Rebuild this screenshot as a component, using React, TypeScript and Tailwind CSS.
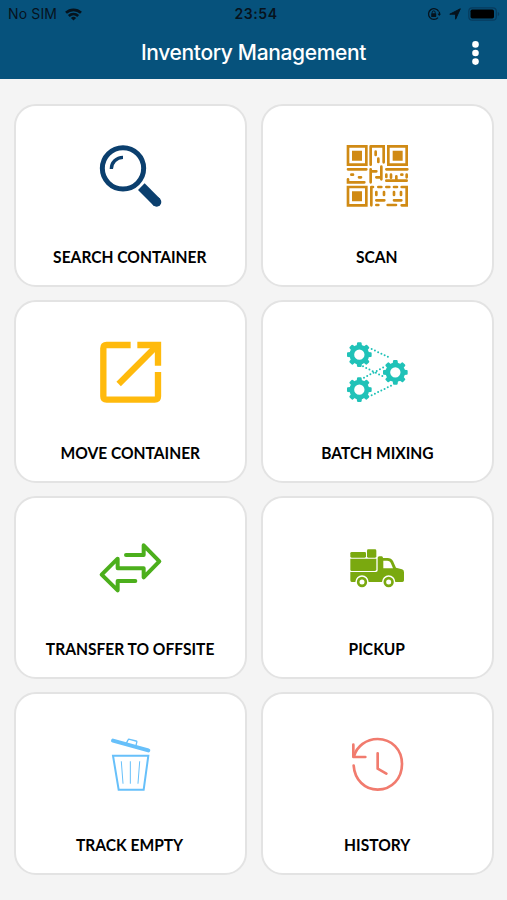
import type { ReactNode } from "react"

const iconProps = {
  viewBox: "0 0 243 240",
  className: "h-[80px] w-[81px] shrink-0",
  fill: "none",
  "aria-hidden": true,
}

const SearchIcon = () => (
  <svg {...iconProps} viewBox="0 3 243 240" stroke="#0b3f6e">
    <circle cx="99" cy="100" r="62" strokeWidth="15" />
    <path d="M64 102C64 83 79 67 99 67" strokeWidth="10" />
    <path d="M154 155L201 202" strokeWidth="28" />
    <circle cx="200" cy="201" r="14" fill="#0b3f6e" stroke="none" />
  </svg>
)

const QrIcon = () => (
  <svg {...iconProps} viewBox="0 3 243 240" stroke="#d08a14" strokeWidth="8" strokeLinecap="round">
    {/* Finder squares */}
    <path d="M33 34H88V89H33ZM154 34H209V89H154ZM33 156H88V211H33Z" />
    <path d="M45 47H75V77H45ZM167 47H197V77H167ZM45 169H75V199H45Z" fill="#d08a14" stroke="none" />
    {/* Data modules */}
    <path d="M101 34V89M101 34H140V82M116 50V60M124 71V81" />
    <path d="M33 103H88M43 119H48M33 133V142H82M66 127H72" />
    <path d="M101 103V142M101 109H118M118 127H133M133 95V133" />
    <path d="M148 103H211M148 119V126M162 119V128M148 137H209M178 124V137M193 119H196M209 119V127" />
    <path d="M103 156V211M103 156H108M124 156H133M148 156H157M171 156H180M194 156H209V211H194" />
    <path d="M118 196H142M171 196H193M118 171V180M141 171V180M171 171V180M192 171V180M118 210H124M152 210H177" />
  </svg>
)

const MoveIcon = () => (
  <svg {...iconProps} stroke="#ffba0c" strokeWidth="19">
    <path d="M122 39H50Q40 39 40 49V193Q40 203 50 203H194Q204 203 204 193V120" />
    <path d="M142 39H204V101" />
    <path d="M86 156L199 43" />
  </svg>
)

const TOOTH_ANGLES = [0, 45, 90, 135, 180, 225, 270, 315]

const Gear = ({ x, y }: { x: number; y: number }) => (
  <g transform={`translate(${x} ${y})`}>
    <circle r="22.5" strokeWidth="14" />
    {TOOTH_ANGLES.map((angle) => (
      <path key={angle} d="M-5 -26L-4 -34H4L5 -26Z" strokeWidth="6" strokeLinejoin="round" fill="#20c2b8" transform={`rotate(${angle})`} />
    ))}
  </g>
)

const BatchIcon = () => (
  <svg {...iconProps} stroke="#20c2b8">
    <Gear x={67} y={68} />
    <Gear x={175} y={121} />
    <Gear x={67} y={173} />
    <path
      d="M104 51L162 79M78 103L140 134M81 137L140 106M104 190L162 161"
      strokeWidth="6"
      strokeLinecap="round"
      strokeDasharray="0 10.8"
    />
  </svg>
)

const TransferIcon = () => (
  <svg {...iconProps} stroke="#4caf1c" strokeWidth="12" strokeLinecap="round" strokeLinejoin="round">
    <path d="M108 81H161V52L208 100L161 148V121H83V92L35 140L83 187V159H136" />
  </svg>
)

const TruckIcon = () => (
  <svg {...iconProps} fill="#7aa90f">
    <rect x="40" y="72" width="47" height="17" rx="4" />
    <rect x="90" y="64" width="28" height="25" rx="4" />
    <path d="M40 92H118V124Q118 129 113 129H44Q40 129 40 125Z" />
    <path d="M40 132H117Q122 132 122 127V90Q122 85 127 85H134Q138 85 138 90H152Q163 90 168 99L177 119L195 124Q201 126 201 133V157Q201 162 196 162H175A20 20 0 0 0 135 162H95A20 20 0 0 0 55 162H44Q40 162 40 157Z" />
    <path d="M139 98H151Q158 98 161 104L168 121H139Z" fill="#fff" />
    <g stroke="#7aa90f" strokeWidth="8" fill="#fff">
      <circle cx="75" cy="162" r="11.5" />
      <circle cx="155" cy="162" r="11.5" />
    </g>
  </svg>
)

const TrashIcon = () => (
  <svg {...iconProps} stroke="#67c0fa" strokeLinecap="round">
    <path d="M69 50L175 79" strokeWidth="12" />
    <path d="M110 56L114 48Q115 45 119 46L138 51Q142 52 140 56L138 64" strokeWidth="4" />
    <path d="M69 95H175L161 197H86Z" strokeWidth="6" />
    <path d="M94 113L99 178M121 113V178M149 113L144 178" strokeWidth="3" />
  </svg>
)

const HistoryIcon = () => (
  <svg {...iconProps} stroke="#f17b6e" strokeWidth="8" strokeLinecap="round" strokeLinejoin="round">
    <path d="M50 125C53 168 84 197 122 197C165 197 195 163 195 120C195 77 164 45 122 45C88 45 59 67 51 97" />
    <path d="M49 62V99H85M122 88V134L148 149" />
  </svg>
)

type Tile = { label: string; icon: ReactNode }

const tiles: Tile[] = [
  { label: "SEARCH CONTAINER", icon: <SearchIcon /> },
  { label: "SCAN", icon: <QrIcon /> },
  { label: "MOVE CONTAINER", icon: <MoveIcon /> },
  { label: "BATCH MIXING", icon: <BatchIcon /> },
  { label: "TRANSFER TO OFFSITE", icon: <TransferIcon /> },
  { label: "PICKUP", icon: <TruckIcon /> },
  { label: "TRACK EMPTY", icon: <TrashIcon /> },
  { label: "HISTORY", icon: <HistoryIcon /> },
]

const StatusBar = () => (
  <div className="grid h-7 grid-cols-3 items-center pl-2 pr-[7px] text-[#06131d]">
    <div className="flex items-center gap-2">
      <span className="text-[14px] leading-none tracking-[0.15px]">No SIM</span>
      <svg viewBox="0 0 17 13" className="h-[13px] w-[17px]" fill="none" stroke="currentColor" strokeWidth="2.7" aria-hidden>
        <path d="M1 4.8C5.2 .8 11.8 .8 16 4.8M3.8 8C6.5 5.5 10.5 5.5 13.2 8" />
        <path d="M8.5 12.5L5.9 9.9Q8.5 7.8 11.1 9.9Z" fill="currentColor" stroke="none" />
      </svg>
    </div>
    <span className="pl-1 text-center text-[14px] font-semibold leading-none tracking-[0.6px]">23:54</span>
    <div className="flex items-center justify-end">
      <svg viewBox="0 0 14 14" className="mr-2 size-[14px]" fill="none" stroke="currentColor" strokeWidth="1.3" aria-hidden>
        <path d="M11.7 4.5A5.4 5.4 0 1 0 11 10.6M12.4 4.8V7.5" />
        <path d="M10.5 6.7H14L12.2 9Z" fill="currentColor" stroke="none" />
        <rect x="4.2" y="6.3" width="5" height="3.7" rx=".5" fill="currentColor" stroke="none" />
        <path d="M5.2 6.5V5.4A1.5 1.5 0 0 1 8.2 5.4V6.5" strokeWidth="1" />
      </svg>
      <svg viewBox="0 0 12 12" className="mr-[7px] size-[12px]" fill="currentColor" stroke="currentColor" strokeWidth="1" strokeLinejoin="round" aria-hidden>
        <path d="M11.3 .8L6.6 11.2V6.2H.8Z" />
      </svg>
      <svg viewBox="0 0 32 14" className="h-[14px] w-[32px]" aria-hidden>
        <rect x=".8" y=".8" width="27.5" height="12.4" rx="3.5" fill="none" stroke="#073b5d" strokeWidth="1.2" />
        <rect x="2.5" y="2.5" width="23.5" height="9" rx="1.7" fill="#000" />
        <path d="M29.8 5V9Q31.3 8.5 31.3 7T29.8 5" fill="#073b5d" />
      </svg>
    </div>
  </div>
)

const App = () => (
  <div className="min-h-[900px] w-full bg-[#f4f4f4] font-['Inter',sans-serif]">
    <header className="h-[79px] bg-[#06527c]">
      <StatusBar />
      <div className="grid h-[49px] grid-cols-[1fr_auto_1fr] items-center">
        <h1 className="col-start-2 text-[21px] font-medium leading-none tracking-[-0.35px] text-white">
          Inventory Management
        </h1>
        <button className="mr-7 justify-self-end" aria-label="More options">
          <svg viewBox="0 0 7 24" className="h-6 w-[7px]" fill="#fff" aria-hidden>
            <circle cx="3.5" cy="3.4" r="3.3" />
            <circle cx="3.5" cy="12" r="3.3" />
            <circle cx="3.5" cy="20.6" r="3.3" />
          </svg>
        </button>
      </div>
    </header>

    <main className="grid grid-cols-2 gap-x-[14px] gap-y-[13px] px-[13.5px] pt-[25px]">
      {tiles.map(({ label, icon }) => (
        <button
          key={label}
          className="flex h-[183px] flex-col items-center rounded-[22px] border-2 border-[#e3e3e3] bg-white pt-[30px]"
        >
          {icon}
          <span className="mt-[31px] scale-x-[0.915] whitespace-nowrap font-['Lato',sans-serif] text-[17px] font-bold leading-5 text-black">
            {label}
          </span>
        </button>
      ))}
    </main>
  </div>
)

export default App
